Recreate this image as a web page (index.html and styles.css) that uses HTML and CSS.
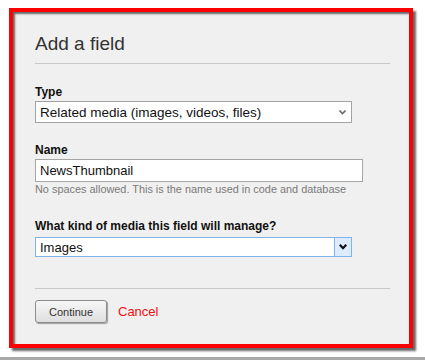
FILE: index.html
```html
<!DOCTYPE html>
<html lang="en">
  <head>
    <meta charset="UTF-8" />
    <title>Add a field</title>
    <link rel="stylesheet" href="styles.css">
  </head>
  <body>
    <div class="frame">
      <h1>Add a field</h1>
      <hr />

      <label class="label">Type</label>
      <div class="select select-type">
        <span>Related media (images, videos, files)</span>
        <svg class="chevron" width="7" height="5" viewBox="0 0 7 5">
          <path d="M0.5 0.5 L3.5 3.5 L6.5 0.5" fill="none" stroke="#6d6d6d" stroke-width="1.6" />
        </svg>
      </div>

      <label class="label label-name">Name</label>
      <input type="text" class="text-input" value="NewsThumbnail" />
      <div class="help">No spaces allowed. This is the name used in code and database</div>

      <label class="label label-media">What kind of media this field will manage?</label>
      <div class="select select-active">
        <span>Images</span>
        <div class="drop-button">
          <svg width="8" height="6" viewBox="0 0 8 6">
            <path d="M0.8 0.8 L4 4.2 L7.2 0.8" fill="none" stroke="#111" stroke-width="2.2" />
          </svg>
        </div>
      </div>

      <hr class="hr-bottom" />
      <div class="actions">
        <button class="btn">Continue</button>
        <a class="cancel" href="#">Cancel</a>
      </div>
    </div>
    <div class="strip"></div>
  </body>
</html>
```

FILE: styles.css
```css
body {
  margin: 0;
  background-color: white;
  font-family: "Liberation Sans", Arial, sans-serif;
  color: #222;
}
.frame {
  box-sizing: border-box;
  width: 404px;
  height: 340px;
  margin: 8px 0 0 9px;
  padding: 21px 19px 0 22px;
  background-color: #f0f0f0;
  border: 4px solid #ff0000;
  box-shadow: 3px 3px 2px rgba(0, 0, 0, 0.6), inset 2px 2px 2px #666;
}
h1 {
  margin: 0;
  font-size: 19px;
  line-height: 22px;
  font-weight: normal;
  color: #333;
}
hr {
  margin: 8px 0 0;
  height: 0;
  border: 0;
  border-top: 1px solid #c8c8c8;
}
.label {
  display: block;
  margin-top: 21px;
  font-size: 12px;
  line-height: 14px;
  font-weight: bold;
  color: #111;
}
.label-name {
  margin-top: 20px;
}
.label-media {
  margin-top: 23px;
}
.select {
  box-sizing: border-box;
  display: flex;
  align-items: center;
  width: 317px;
  height: 22px;
  margin-top: 2px;
  padding-left: 4px;
  background-color: white;
  border: 1px solid #a3a3a3;
  font-size: 13px;
  color: #111;
}
.select span {
  flex: 1;
}
.select-type {
  font-size: 13.5px;
}
.chevron {
  margin-right: 5px;
}
.select-active {
  height: 20px;
  margin-top: 4px;
  border-color: #7eb4ea;
}
.drop-button {
  display: flex;
  align-items: center;
  justify-content: center;
  width: 16px;
  height: 100%;
  background-color: #dcecfc;
  border-left: 1px solid #7eb4ea;
}
.text-input {
  display: block;
  box-sizing: border-box;
  width: 328px;
  height: 23px;
  margin: 2px 0 0;
  padding: 0 4px;
  background-color: white;
  border: 1px solid #a6a6a6;
  font-family: inherit;
  font-size: 13px;
  color: #111;
  outline: none;
}
.help {
  margin-top: 1px;
  font-size: 10.9px;
  line-height: 13px;
  color: #7a7a7a;
}
.hr-bottom {
  margin-top: 31px;
}
.actions {
  display: flex;
  align-items: center;
  margin-top: 11px;
}
.btn {
  box-sizing: border-box;
  width: 72px;
  height: 23px;
  padding: 0;
  border: 1px solid #8c8c8c;
  border-radius: 3px;
  background: linear-gradient(#f7f7f7, #dedede);
  box-shadow: 1px 1px 1px rgba(0, 0, 0, 0.35);
  font-family: inherit;
  font-size: 11px;
  color: #333;
}
.cancel {
  margin-left: 11px;
  font-size: 13px;
  color: #f01010;
  text-decoration: none;
}
.strip {
  height: 3px;
  margin-top: 9px;
  background-color: #a9a9a9;
}
```
